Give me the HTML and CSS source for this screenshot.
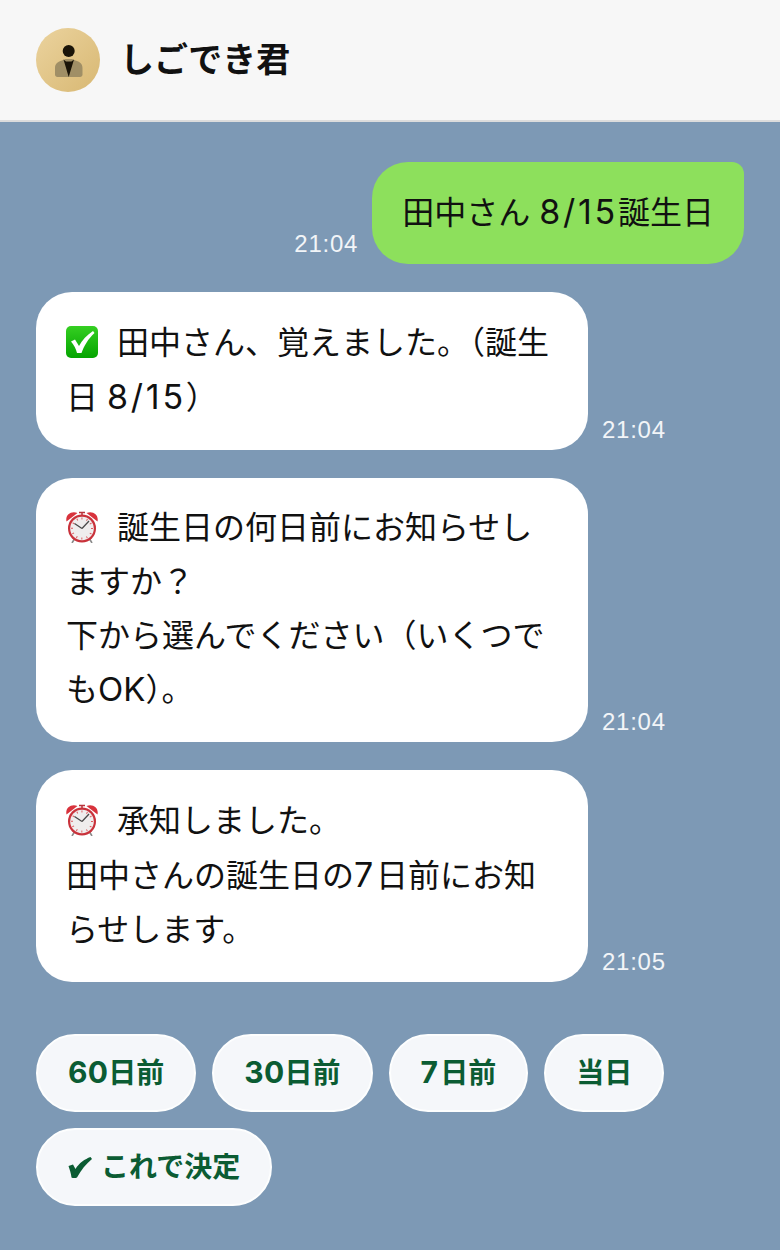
FILE: index.html
```html
<!DOCTYPE html>
<html lang="ja">
<head>
<meta charset="utf-8">
<title>しごでき君</title>
<link rel="stylesheet" href="styles.css">
</head>
<body>
<header class="header">
  <svg class="avatar" viewBox="0 0 64 64" width="64" height="64">
    <defs>
      <linearGradient id="gold" x1="0" y1="0" x2="1" y2="1"><stop offset="0" stop-color="#ebd39e"/><stop offset="1" stop-color="#d8b873"/></linearGradient>
    </defs>
    <circle cx="32" cy="32" r="32" fill="url(#gold)"/>
    <circle cx="32.700" cy="23" r="6" fill="#1a1408"/>
    <path d="M19 46.500V40c0-4.500 3-6.500 7-7.500l3.500-1.500h6.500l3.500 1.500c4 1 7 3 7 7.500v6.500c0 1.500-1 2.500-2.500 2.500h-22.500c-1.500 0-2.500-1-2.500-2.500z" fill="#a08f66"/>
    <path d="M27.500 31.500L32.700 49 38 31.500 35.500 33.500H30Z" fill="#1a1408"/>
  </svg>
  <h1 class="title">しごでき君</h1>
</header>
<main class="chat">
  <div class="row row-me">
    <span class="time">21:04</span>
    <div class="bubble bubble-me">田中さん <span class="num">8/15</span>誕生日</div>
  </div>
  <div class="row">
    <div class="bubble bubble-bot lines-55">
      <svg class="emoji" viewBox="0 0 32 32" width="32" height="32"><defs><linearGradient id="chk" x1="0" y1="0" x2="0" y2="1"><stop offset="0" stop-color="#35cf22"/><stop offset="1" stop-color="#04a400"/></linearGradient></defs><rect width="32" height="32" rx="5" fill="url(#chk)"/><path d="M5 15.500L9 13.500 13 20C16 14 21 9 27 5L28.500 7C22 13 18 20 15.500 27H11C10 23 8 19 5 15.500Z" fill="#fff"/></svg>田中さん、覚えました。（誕生<br>日 <span class="num">8/15</span>）
    </div>
    <span class="time">21:04</span>
  </div>
  <div class="row">
    <div class="bubble bubble-bot">
      <svg class="emoji" viewBox="0 0 32 32" width="32" height="32"><defs><g id="clock"><path d="M6 32l3-5M26 32l-3-5" stroke="#8a8a8a" stroke-width="1.600"/><path d="M13 1.500h6M16 1.500v3" stroke="#b8333b" stroke-width="1.500"/><path d="M.5 10.500C-1 4 5-.5 11.500 2zM31.500 10.500C33 4 27-.5 20.500 2z" fill="#d8323c"/><circle cx="16" cy="17.500" r="14" fill="#c9323b"/><circle cx="16" cy="17.500" r="11.800" fill="#efeded"/><circle cx="16" cy="17.500" r="10" fill="none" stroke="#dc5a5f" stroke-width="2" stroke-dasharray="1 4.236" transform="rotate(-93 16 17.500)"/><path d="M16 17.500l-7.500-5M16 17.500l7-7.500" stroke="#4a4a4a" stroke-width="1.300"/></g></defs><use href="#clock"/></svg>誕生日の何日前にお知らせし<br>ますか？<br>下から選んでください（いくつで<br>も<span class="latin">OK</span>）。
    </div>
    <span class="time">21:04</span>
  </div>
  <div class="row">
    <div class="bubble bubble-bot lines-54">
      <svg class="emoji" viewBox="0 0 32 32" width="32" height="32"><use href="#clock"/></svg>承知しました。<br>田中さんの誕生日の<span class="num">7</span>日前にお知<br>らせします。
    </div>
    <span class="time">21:05</span>
  </div>
  <div class="chips">
    <button class="chip"><span class="digits">60</span>日前</button>
    <button class="chip"><span class="digits">30</span>日前</button>
    <button class="chip"><span class="digits seven">7</span>日前</button>
    <button class="chip">当日</button>
    <button class="chip"><svg class="tick" viewBox="0 0 24 21" width="24" height="21"><path d="M.5 9L5 7.500 7.500 12C11 6 17 2 22.500 0L24 2C18 7 13 13 9 20.500Q6 22 3.500 20.500C3 16 1.500 12 .5 9Z" fill="#0b5c33"/></svg>これで決定</button>
  </div>
</main>
</body>
</html>
```
FILE: styles.css
```css
* { box-sizing: border-box; }
html, body { margin: 0; height: 100%; }
body {
  background: #7d99b5;
  font-family: "Inter", "Noto Sans CJK JP", sans-serif;
  color: #111;
  overflow: hidden;
}
.header {
  height: 122px;
  background: #f7f7f7;
  border-bottom: 2px solid #dcdcdc;
  display: flex;
  align-items: center;
  gap: 20px;
  padding: 0 36px 2px;
}
.avatar { display: block; flex: none; margin-top: 2px; }
.title { margin: 2px 0 0; font-size: 34px; font-weight: 700; line-height: 1.2; color: #111; }
.chat {
  padding: 40px 36px 0;
  display: flex;
  flex-direction: column;
  gap: 28px;
}
.row { display: flex; align-items: flex-end; gap: 14px; }
.row-me { justify-content: flex-end; }
.time {
  font-family: "Liberation Sans", sans-serif;
  font-size: 24px;
  letter-spacing: .75px;
  line-height: 28px;
  color: #f2f5f8;
  margin-bottom: 6px;
}
.bubble {
  font-size: 32px;
  line-height: 54px;
  padding: 24px 30px;
  white-space: nowrap;
  border-radius: 36px;
}
.bubble-me { background: #8de05c; border-top-right-radius: 12px; }
.bubble-bot { background: #fff; width: 552px; padding-top: 23px; padding-bottom: 25px; }
.lines-55 { line-height: 55px; }
.lines-54 { line-height: 54.670px; padding-top: 24px; padding-bottom: 24px; }
.num { font-size: 34px; letter-spacing: 2.750px; line-height: 1; }
.latin { font-size: 33px; line-height: 1; }
.emoji { display: inline-block; width: 32px; height: 32px; vertical-align: -4px; margin-right: 19px; }
.chips {
  display: flex;
  flex-wrap: wrap;
  gap: 16px;
  margin-top: 24px;
  width: 640px;
}
.chip {
  height: 78px;
  padding: 0 30px 4px;
  border: 2px solid #fdfefe;
  border-radius: 39px;
  background: #f5f7fa;
  color: #0b5c33;
  font-family: inherit;
  font-size: 28px;
  font-weight: 700;
  white-space: nowrap;
}
.digits { font-size: 30px; letter-spacing: .3px; line-height: 1; }
.seven { letter-spacing: 2.200px; }
.tick { width: 24px; height: 21px; vertical-align: -1px; margin-right: 9px; }
```
